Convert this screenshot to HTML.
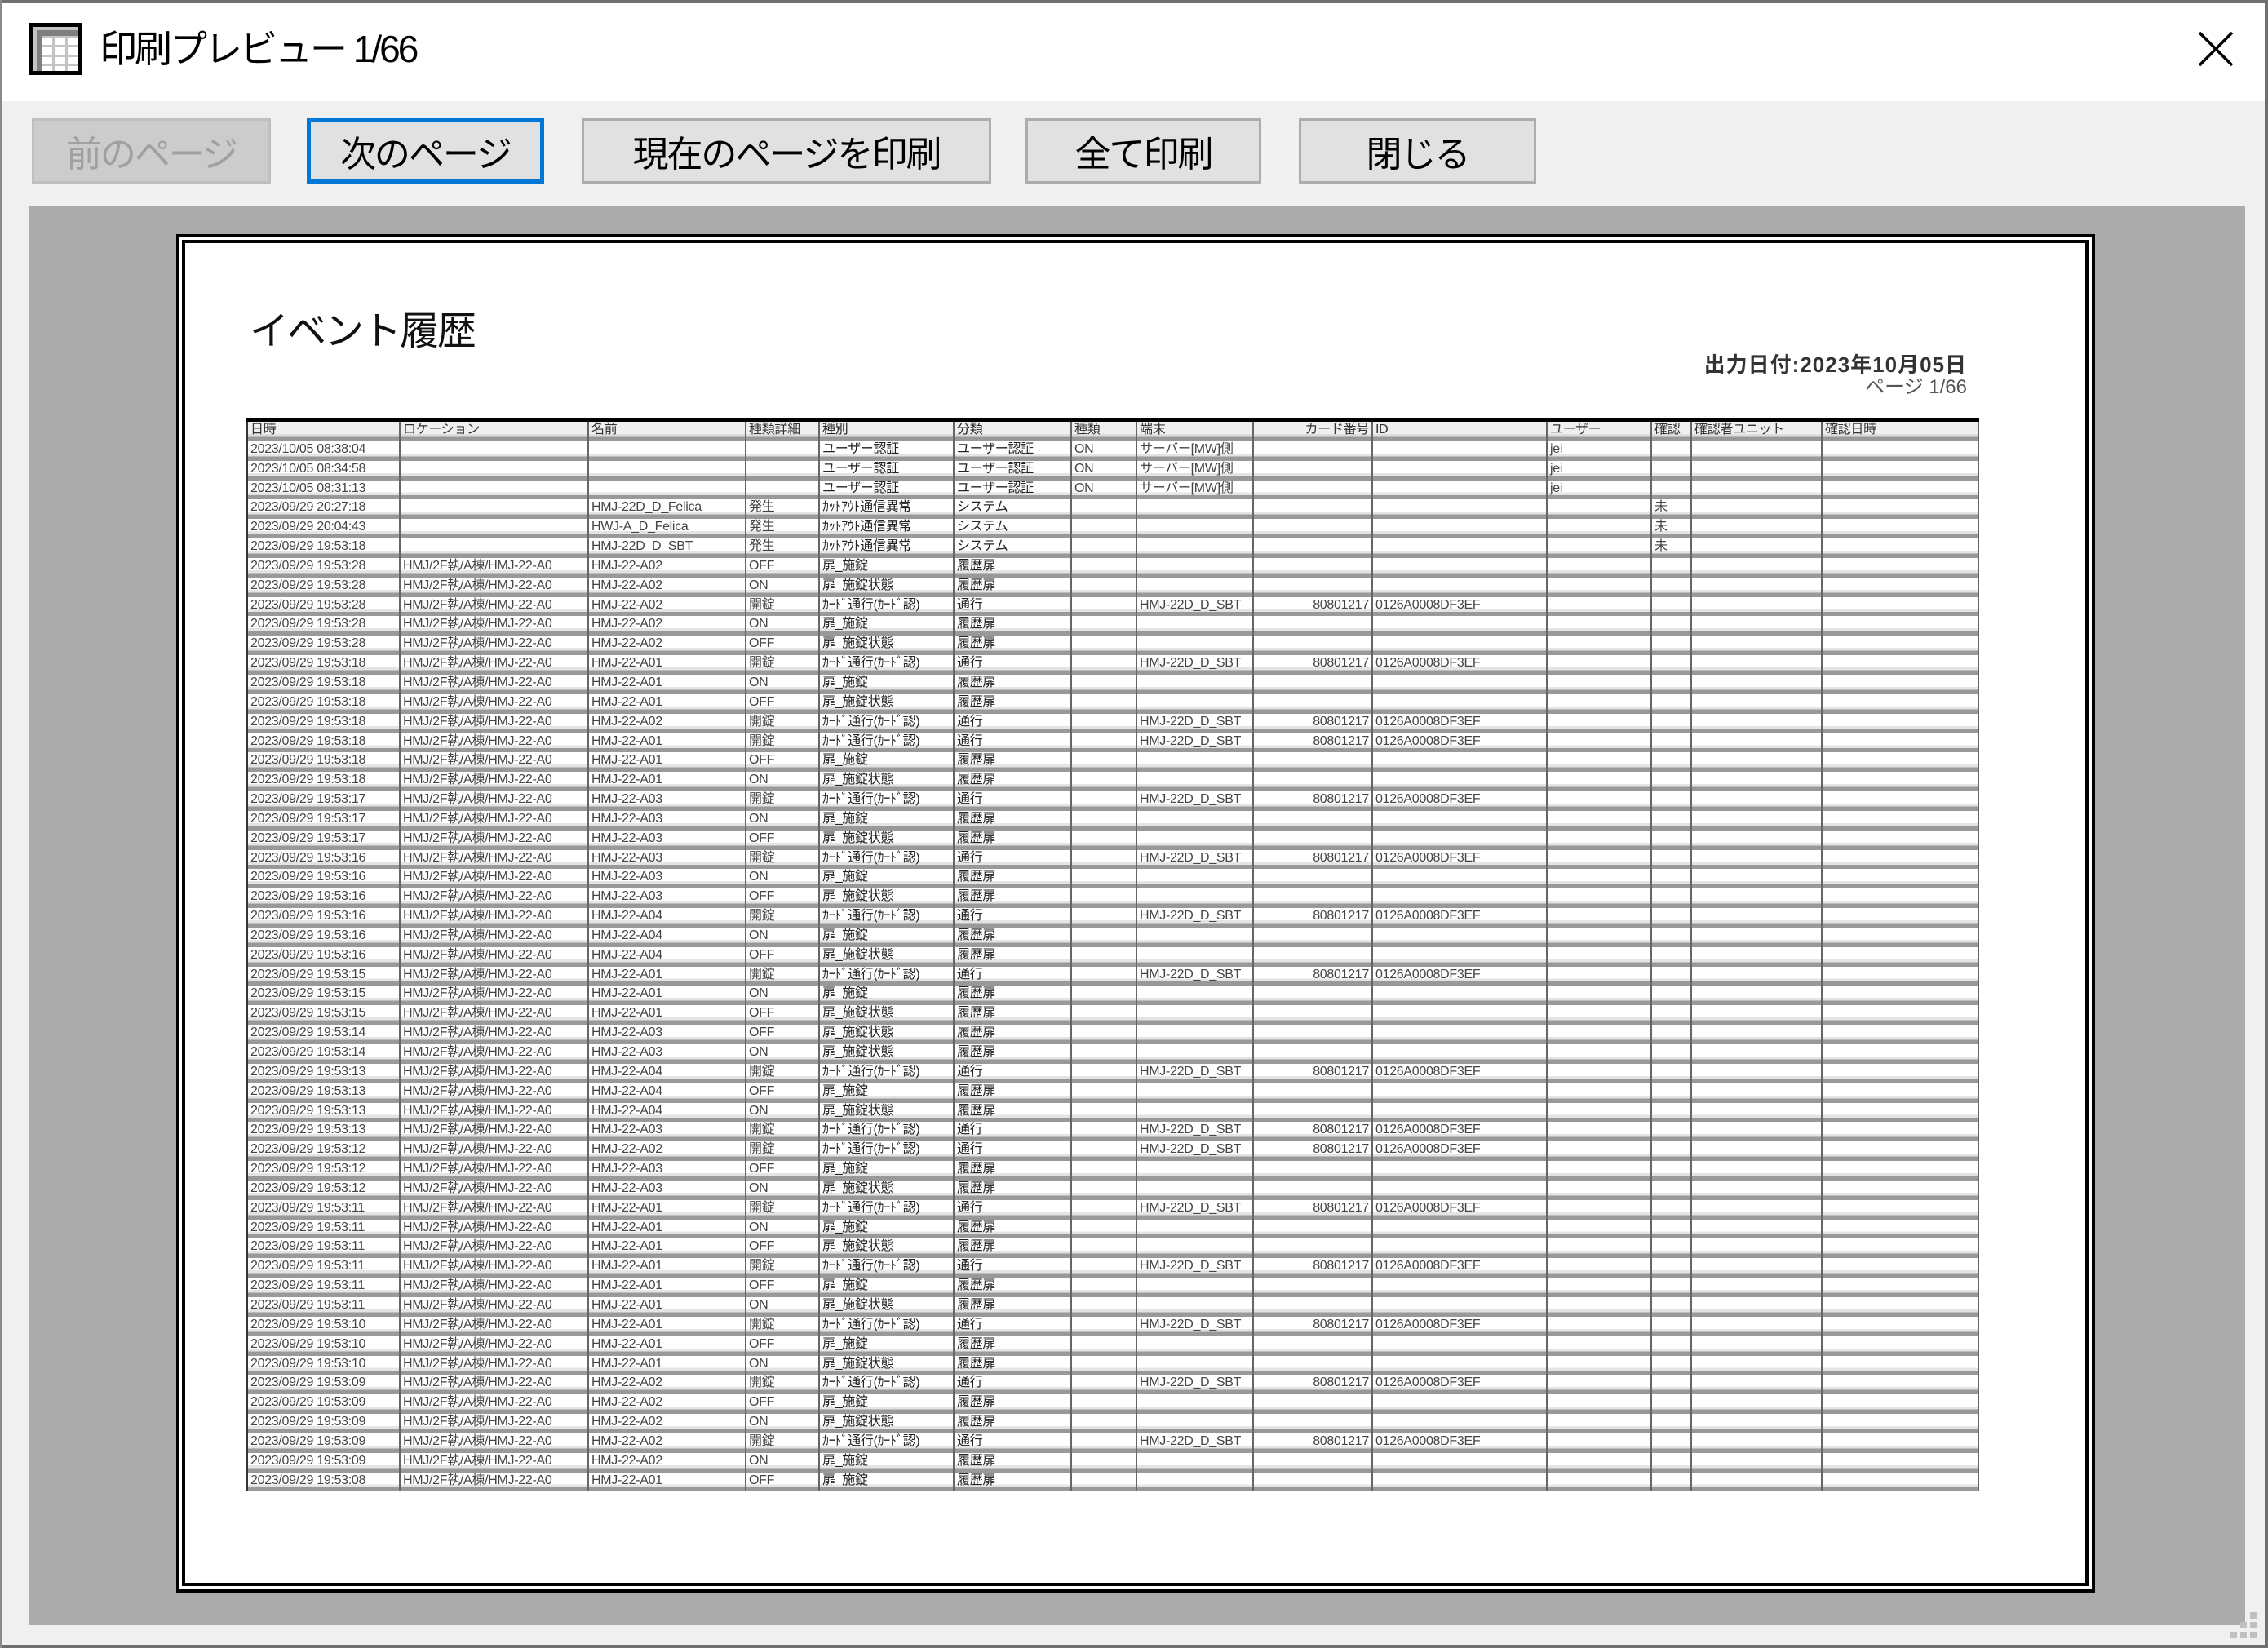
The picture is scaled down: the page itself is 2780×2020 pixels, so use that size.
<!DOCTYPE html>
<html><head><meta charset="utf-8"><style>
*{margin:0;padding:0;box-sizing:border-box}
body{width:2780px;height:2020px;background:#f0f0f0;position:relative;overflow:hidden;font-family:"Liberation Sans","Noto Sans CJK JP",sans-serif}
.abs{position:absolute}
#tb{left:0;top:0;width:2780px;height:124px;background:#fff}
.btn{position:absolute;top:145px;height:80px;background:#e1e1e1;border:3px solid #adadad;font-size:44px;color:#000;display:flex;align-items:center;justify-content:center;letter-spacing:-2px}
#gray{left:35px;top:252px;width:2717px;height:1740px;background:#ababab}
#page{left:216px;top:287px;width:2352px;height:1665px;background:#fff;border:4px solid #000}
#inner{left:3px;top:3px;right:4px;bottom:4px;border:4px solid #000;position:absolute}
#tbl{left:301px;top:512px;width:2125px;border-top:5px solid #000}
.r{display:flex;height:23.85px;background:linear-gradient(#fff 0,#fff 62%,#e4e4e4 62%,#e4e4e4 78%,#999 78%)}
.r.h{background:linear-gradient(#efefef 0,#efefef 62%,#ddd 62%,#ddd 78%,#999 78%)}
.r i{font-style:normal;font-size:16px;color:#444;line-height:20px;white-space:nowrap;overflow:hidden;border-right:2px solid #666;padding-left:3px;letter-spacing:-0.3px}
.r.h i{color:#333}
.r i:nth-child(1){width:190px;border-left:3px solid #333}
.r i:nth-child(2){width:231px}.r i:nth-child(3){width:193px}.r i:nth-child(4){width:90px}
.r i:nth-child(5){width:165px;color:#222}.r i:nth-child(6){width:144px;color:#222}.r i:nth-child(7){width:80px}
.r i:nth-child(8){width:143px}.r i:nth-child(9){width:146px;text-align:right;padding-right:3px}.r i:nth-child(10){width:214px}
.r i:nth-child(11){width:128px}.r i:nth-child(12){width:49px}.r i:nth-child(13){width:160px}.r i:nth-child(14){width:192px}
</style></head><body>
<div class="abs" style="left:0;top:0;width:2780px;height:4px;background:#6f6f6f;z-index:3"></div>
<div class="abs" style="left:2776px;top:0;width:4px;height:2020px;background:#6f6f6f;z-index:3"></div>
<div class="abs" style="left:0;top:2016px;width:2780px;height:4px;background:#6f6f6f;z-index:3"></div>
<div class="abs" style="left:0;top:0;width:2px;height:2020px;background:#8a8a8a;z-index:3"></div>
<div id="tb" class="abs">
<svg class="abs" style="left:36px;top:28px" width="64" height="64" viewBox="0 0 64 64">
<rect x="0" y="0" width="64" height="64" fill="#000"/>
<rect x="5" y="5" width="54" height="54" fill="#c4c4c4"/>
<rect x="9" y="9" width="50" height="50" fill="#7f7f7f"/>
<rect x="16" y="16" width="43" height="43" fill="#c4c4c4"/>
<g fill="#fff"><rect x="16" y="18" width="12" height="9"/><rect x="31" y="18" width="13" height="9"/><rect x="47" y="18" width="12" height="9"/>
<rect x="16" y="30" width="12" height="9"/><rect x="31" y="30" width="13" height="9"/><rect x="47" y="30" width="12" height="9"/>
<rect x="16" y="42" width="12" height="8"/><rect x="31" y="42" width="13" height="8"/><rect x="47" y="42" width="12" height="8"/>
<rect x="16" y="53" width="12" height="6"/><rect x="31" y="53" width="13" height="6"/><rect x="47" y="53" width="12" height="6"/></g>
</svg>
<div class="abs" style="left:122px;top:30px;font-size:46px;color:#000;letter-spacing:-3px;line-height:60px">印刷プレビュー 1/66</div>
<svg class="abs" style="left:2694px;top:38px" width="44" height="44" viewBox="0 0 44 44"><path d="M2 2L42 42M42 2L2 42" stroke="#000" stroke-width="3.5"/></svg>
</div>
<div class="btn" style="left:39px;width:293px;background:#cccccc;border-color:#bfbfbf;color:#a0a0a0">前のページ</div>
<div class="btn" style="left:376px;width:291px;border:5px solid #0078d7">次のページ</div>
<div class="btn" style="left:713px;width:502px">現在のページを印刷</div>
<div class="btn" style="left:1257px;width:289px">全て印刷</div>
<div class="btn" style="left:1592px;width:291px">閉じる</div>
<div id="gray" class="abs"></div>
<svg class="abs" style="left:2734px;top:1974px" width="36" height="36"><g fill="#c0c0c0"><rect x="24" y="2" width="8" height="8"/><rect x="12" y="14" width="8" height="8"/><rect x="24" y="14" width="8" height="8"/><rect x="0" y="26" width="8" height="8"/><rect x="12" y="26" width="8" height="8"/><rect x="24" y="26" width="8" height="8"/></g></svg>
<div id="page" class="abs"><div id="inner"></div></div>
<div class="abs" style="left:306px;top:366px;font-size:48px;color:#111;letter-spacing:-2px">イベント履歴</div>
<div class="abs" style="left:1900px;top:432px;width:511px;text-align:right;font-size:26px;font-weight:bold;color:#333;letter-spacing:1px;line-height:30px">出力日付:2023年10月05日</div>
<div class="abs" style="left:1900px;top:460px;width:511px;text-align:right;font-size:24px;color:#555;letter-spacing:0px;line-height:30px">ページ 1/66</div>
<div id="tbl" class="abs">
<div class="r h"><i>日時</i><i>ロケーション</i><i>名前</i><i>種類詳細</i><i>種別</i><i>分類</i><i>種類</i><i>端末</i><i>カード番号</i><i>ID</i><i>ユーザー</i><i>確認</i><i>確認者ユニット</i><i>確認日時</i></div>
<div class="r"><i>2023/10/05 08:38:04</i><i></i><i></i><i></i><i>ユーザー認証</i><i>ユーザー認証</i><i>ON</i><i>サーバー[MW]側</i><i></i><i></i><i>jei</i><i></i><i></i><i></i></div>
<div class="r"><i>2023/10/05 08:34:58</i><i></i><i></i><i></i><i>ユーザー認証</i><i>ユーザー認証</i><i>ON</i><i>サーバー[MW]側</i><i></i><i></i><i>jei</i><i></i><i></i><i></i></div>
<div class="r"><i>2023/10/05 08:31:13</i><i></i><i></i><i></i><i>ユーザー認証</i><i>ユーザー認証</i><i>ON</i><i>サーバー[MW]側</i><i></i><i></i><i>jei</i><i></i><i></i><i></i></div>
<div class="r"><i>2023/09/29 20:27:18</i><i></i><i>HMJ-22D_D_Felica</i><i>発生</i><i>ｶｯﾄｱｳﾄ通信異常</i><i>システム</i><i></i><i></i><i></i><i></i><i></i><i>未</i><i></i><i></i></div>
<div class="r"><i>2023/09/29 20:04:43</i><i></i><i>HWJ-A_D_Felica</i><i>発生</i><i>ｶｯﾄｱｳﾄ通信異常</i><i>システム</i><i></i><i></i><i></i><i></i><i></i><i>未</i><i></i><i></i></div>
<div class="r"><i>2023/09/29 19:53:18</i><i></i><i>HMJ-22D_D_SBT</i><i>発生</i><i>ｶｯﾄｱｳﾄ通信異常</i><i>システム</i><i></i><i></i><i></i><i></i><i></i><i>未</i><i></i><i></i></div>
<div class="r"><i>2023/09/29 19:53:28</i><i>HMJ/2F執/A棟/HMJ-22-A0</i><i>HMJ-22-A02</i><i>OFF</i><i>扉_施錠</i><i>履歴扉</i><i></i><i></i><i></i><i></i><i></i><i></i><i></i><i></i></div>
<div class="r"><i>2023/09/29 19:53:28</i><i>HMJ/2F執/A棟/HMJ-22-A0</i><i>HMJ-22-A02</i><i>ON</i><i>扉_施錠状態</i><i>履歴扉</i><i></i><i></i><i></i><i></i><i></i><i></i><i></i><i></i></div>
<div class="r"><i>2023/09/29 19:53:28</i><i>HMJ/2F執/A棟/HMJ-22-A0</i><i>HMJ-22-A02</i><i>開錠</i><i>ｶｰﾄﾞ通行(ｶｰﾄﾞ認)</i><i>通行</i><i></i><i>HMJ-22D_D_SBT</i><i>80801217</i><i>0126A0008DF3EF</i><i></i><i></i><i></i><i></i></div>
<div class="r"><i>2023/09/29 19:53:28</i><i>HMJ/2F執/A棟/HMJ-22-A0</i><i>HMJ-22-A02</i><i>ON</i><i>扉_施錠</i><i>履歴扉</i><i></i><i></i><i></i><i></i><i></i><i></i><i></i><i></i></div>
<div class="r"><i>2023/09/29 19:53:28</i><i>HMJ/2F執/A棟/HMJ-22-A0</i><i>HMJ-22-A02</i><i>OFF</i><i>扉_施錠状態</i><i>履歴扉</i><i></i><i></i><i></i><i></i><i></i><i></i><i></i><i></i></div>
<div class="r"><i>2023/09/29 19:53:18</i><i>HMJ/2F執/A棟/HMJ-22-A0</i><i>HMJ-22-A01</i><i>開錠</i><i>ｶｰﾄﾞ通行(ｶｰﾄﾞ認)</i><i>通行</i><i></i><i>HMJ-22D_D_SBT</i><i>80801217</i><i>0126A0008DF3EF</i><i></i><i></i><i></i><i></i></div>
<div class="r"><i>2023/09/29 19:53:18</i><i>HMJ/2F執/A棟/HMJ-22-A0</i><i>HMJ-22-A01</i><i>ON</i><i>扉_施錠</i><i>履歴扉</i><i></i><i></i><i></i><i></i><i></i><i></i><i></i><i></i></div>
<div class="r"><i>2023/09/29 19:53:18</i><i>HMJ/2F執/A棟/HMJ-22-A0</i><i>HMJ-22-A01</i><i>OFF</i><i>扉_施錠状態</i><i>履歴扉</i><i></i><i></i><i></i><i></i><i></i><i></i><i></i><i></i></div>
<div class="r"><i>2023/09/29 19:53:18</i><i>HMJ/2F執/A棟/HMJ-22-A0</i><i>HMJ-22-A02</i><i>開錠</i><i>ｶｰﾄﾞ通行(ｶｰﾄﾞ認)</i><i>通行</i><i></i><i>HMJ-22D_D_SBT</i><i>80801217</i><i>0126A0008DF3EF</i><i></i><i></i><i></i><i></i></div>
<div class="r"><i>2023/09/29 19:53:18</i><i>HMJ/2F執/A棟/HMJ-22-A0</i><i>HMJ-22-A01</i><i>開錠</i><i>ｶｰﾄﾞ通行(ｶｰﾄﾞ認)</i><i>通行</i><i></i><i>HMJ-22D_D_SBT</i><i>80801217</i><i>0126A0008DF3EF</i><i></i><i></i><i></i><i></i></div>
<div class="r"><i>2023/09/29 19:53:18</i><i>HMJ/2F執/A棟/HMJ-22-A0</i><i>HMJ-22-A01</i><i>OFF</i><i>扉_施錠</i><i>履歴扉</i><i></i><i></i><i></i><i></i><i></i><i></i><i></i><i></i></div>
<div class="r"><i>2023/09/29 19:53:18</i><i>HMJ/2F執/A棟/HMJ-22-A0</i><i>HMJ-22-A01</i><i>ON</i><i>扉_施錠状態</i><i>履歴扉</i><i></i><i></i><i></i><i></i><i></i><i></i><i></i><i></i></div>
<div class="r"><i>2023/09/29 19:53:17</i><i>HMJ/2F執/A棟/HMJ-22-A0</i><i>HMJ-22-A03</i><i>開錠</i><i>ｶｰﾄﾞ通行(ｶｰﾄﾞ認)</i><i>通行</i><i></i><i>HMJ-22D_D_SBT</i><i>80801217</i><i>0126A0008DF3EF</i><i></i><i></i><i></i><i></i></div>
<div class="r"><i>2023/09/29 19:53:17</i><i>HMJ/2F執/A棟/HMJ-22-A0</i><i>HMJ-22-A03</i><i>ON</i><i>扉_施錠</i><i>履歴扉</i><i></i><i></i><i></i><i></i><i></i><i></i><i></i><i></i></div>
<div class="r"><i>2023/09/29 19:53:17</i><i>HMJ/2F執/A棟/HMJ-22-A0</i><i>HMJ-22-A03</i><i>OFF</i><i>扉_施錠状態</i><i>履歴扉</i><i></i><i></i><i></i><i></i><i></i><i></i><i></i><i></i></div>
<div class="r"><i>2023/09/29 19:53:16</i><i>HMJ/2F執/A棟/HMJ-22-A0</i><i>HMJ-22-A03</i><i>開錠</i><i>ｶｰﾄﾞ通行(ｶｰﾄﾞ認)</i><i>通行</i><i></i><i>HMJ-22D_D_SBT</i><i>80801217</i><i>0126A0008DF3EF</i><i></i><i></i><i></i><i></i></div>
<div class="r"><i>2023/09/29 19:53:16</i><i>HMJ/2F執/A棟/HMJ-22-A0</i><i>HMJ-22-A03</i><i>ON</i><i>扉_施錠</i><i>履歴扉</i><i></i><i></i><i></i><i></i><i></i><i></i><i></i><i></i></div>
<div class="r"><i>2023/09/29 19:53:16</i><i>HMJ/2F執/A棟/HMJ-22-A0</i><i>HMJ-22-A03</i><i>OFF</i><i>扉_施錠状態</i><i>履歴扉</i><i></i><i></i><i></i><i></i><i></i><i></i><i></i><i></i></div>
<div class="r"><i>2023/09/29 19:53:16</i><i>HMJ/2F執/A棟/HMJ-22-A0</i><i>HMJ-22-A04</i><i>開錠</i><i>ｶｰﾄﾞ通行(ｶｰﾄﾞ認)</i><i>通行</i><i></i><i>HMJ-22D_D_SBT</i><i>80801217</i><i>0126A0008DF3EF</i><i></i><i></i><i></i><i></i></div>
<div class="r"><i>2023/09/29 19:53:16</i><i>HMJ/2F執/A棟/HMJ-22-A0</i><i>HMJ-22-A04</i><i>ON</i><i>扉_施錠</i><i>履歴扉</i><i></i><i></i><i></i><i></i><i></i><i></i><i></i><i></i></div>
<div class="r"><i>2023/09/29 19:53:16</i><i>HMJ/2F執/A棟/HMJ-22-A0</i><i>HMJ-22-A04</i><i>OFF</i><i>扉_施錠状態</i><i>履歴扉</i><i></i><i></i><i></i><i></i><i></i><i></i><i></i><i></i></div>
<div class="r"><i>2023/09/29 19:53:15</i><i>HMJ/2F執/A棟/HMJ-22-A0</i><i>HMJ-22-A01</i><i>開錠</i><i>ｶｰﾄﾞ通行(ｶｰﾄﾞ認)</i><i>通行</i><i></i><i>HMJ-22D_D_SBT</i><i>80801217</i><i>0126A0008DF3EF</i><i></i><i></i><i></i><i></i></div>
<div class="r"><i>2023/09/29 19:53:15</i><i>HMJ/2F執/A棟/HMJ-22-A0</i><i>HMJ-22-A01</i><i>ON</i><i>扉_施錠</i><i>履歴扉</i><i></i><i></i><i></i><i></i><i></i><i></i><i></i><i></i></div>
<div class="r"><i>2023/09/29 19:53:15</i><i>HMJ/2F執/A棟/HMJ-22-A0</i><i>HMJ-22-A01</i><i>OFF</i><i>扉_施錠状態</i><i>履歴扉</i><i></i><i></i><i></i><i></i><i></i><i></i><i></i><i></i></div>
<div class="r"><i>2023/09/29 19:53:14</i><i>HMJ/2F執/A棟/HMJ-22-A0</i><i>HMJ-22-A03</i><i>OFF</i><i>扉_施錠状態</i><i>履歴扉</i><i></i><i></i><i></i><i></i><i></i><i></i><i></i><i></i></div>
<div class="r"><i>2023/09/29 19:53:14</i><i>HMJ/2F執/A棟/HMJ-22-A0</i><i>HMJ-22-A03</i><i>ON</i><i>扉_施錠状態</i><i>履歴扉</i><i></i><i></i><i></i><i></i><i></i><i></i><i></i><i></i></div>
<div class="r"><i>2023/09/29 19:53:13</i><i>HMJ/2F執/A棟/HMJ-22-A0</i><i>HMJ-22-A04</i><i>開錠</i><i>ｶｰﾄﾞ通行(ｶｰﾄﾞ認)</i><i>通行</i><i></i><i>HMJ-22D_D_SBT</i><i>80801217</i><i>0126A0008DF3EF</i><i></i><i></i><i></i><i></i></div>
<div class="r"><i>2023/09/29 19:53:13</i><i>HMJ/2F執/A棟/HMJ-22-A0</i><i>HMJ-22-A04</i><i>OFF</i><i>扉_施錠</i><i>履歴扉</i><i></i><i></i><i></i><i></i><i></i><i></i><i></i><i></i></div>
<div class="r"><i>2023/09/29 19:53:13</i><i>HMJ/2F執/A棟/HMJ-22-A0</i><i>HMJ-22-A04</i><i>ON</i><i>扉_施錠状態</i><i>履歴扉</i><i></i><i></i><i></i><i></i><i></i><i></i><i></i><i></i></div>
<div class="r"><i>2023/09/29 19:53:13</i><i>HMJ/2F執/A棟/HMJ-22-A0</i><i>HMJ-22-A03</i><i>開錠</i><i>ｶｰﾄﾞ通行(ｶｰﾄﾞ認)</i><i>通行</i><i></i><i>HMJ-22D_D_SBT</i><i>80801217</i><i>0126A0008DF3EF</i><i></i><i></i><i></i><i></i></div>
<div class="r"><i>2023/09/29 19:53:12</i><i>HMJ/2F執/A棟/HMJ-22-A0</i><i>HMJ-22-A02</i><i>開錠</i><i>ｶｰﾄﾞ通行(ｶｰﾄﾞ認)</i><i>通行</i><i></i><i>HMJ-22D_D_SBT</i><i>80801217</i><i>0126A0008DF3EF</i><i></i><i></i><i></i><i></i></div>
<div class="r"><i>2023/09/29 19:53:12</i><i>HMJ/2F執/A棟/HMJ-22-A0</i><i>HMJ-22-A03</i><i>OFF</i><i>扉_施錠</i><i>履歴扉</i><i></i><i></i><i></i><i></i><i></i><i></i><i></i><i></i></div>
<div class="r"><i>2023/09/29 19:53:12</i><i>HMJ/2F執/A棟/HMJ-22-A0</i><i>HMJ-22-A03</i><i>ON</i><i>扉_施錠状態</i><i>履歴扉</i><i></i><i></i><i></i><i></i><i></i><i></i><i></i><i></i></div>
<div class="r"><i>2023/09/29 19:53:11</i><i>HMJ/2F執/A棟/HMJ-22-A0</i><i>HMJ-22-A01</i><i>開錠</i><i>ｶｰﾄﾞ通行(ｶｰﾄﾞ認)</i><i>通行</i><i></i><i>HMJ-22D_D_SBT</i><i>80801217</i><i>0126A0008DF3EF</i><i></i><i></i><i></i><i></i></div>
<div class="r"><i>2023/09/29 19:53:11</i><i>HMJ/2F執/A棟/HMJ-22-A0</i><i>HMJ-22-A01</i><i>ON</i><i>扉_施錠</i><i>履歴扉</i><i></i><i></i><i></i><i></i><i></i><i></i><i></i><i></i></div>
<div class="r"><i>2023/09/29 19:53:11</i><i>HMJ/2F執/A棟/HMJ-22-A0</i><i>HMJ-22-A01</i><i>OFF</i><i>扉_施錠状態</i><i>履歴扉</i><i></i><i></i><i></i><i></i><i></i><i></i><i></i><i></i></div>
<div class="r"><i>2023/09/29 19:53:11</i><i>HMJ/2F執/A棟/HMJ-22-A0</i><i>HMJ-22-A01</i><i>開錠</i><i>ｶｰﾄﾞ通行(ｶｰﾄﾞ認)</i><i>通行</i><i></i><i>HMJ-22D_D_SBT</i><i>80801217</i><i>0126A0008DF3EF</i><i></i><i></i><i></i><i></i></div>
<div class="r"><i>2023/09/29 19:53:11</i><i>HMJ/2F執/A棟/HMJ-22-A0</i><i>HMJ-22-A01</i><i>OFF</i><i>扉_施錠</i><i>履歴扉</i><i></i><i></i><i></i><i></i><i></i><i></i><i></i><i></i></div>
<div class="r"><i>2023/09/29 19:53:11</i><i>HMJ/2F執/A棟/HMJ-22-A0</i><i>HMJ-22-A01</i><i>ON</i><i>扉_施錠状態</i><i>履歴扉</i><i></i><i></i><i></i><i></i><i></i><i></i><i></i><i></i></div>
<div class="r"><i>2023/09/29 19:53:10</i><i>HMJ/2F執/A棟/HMJ-22-A0</i><i>HMJ-22-A01</i><i>開錠</i><i>ｶｰﾄﾞ通行(ｶｰﾄﾞ認)</i><i>通行</i><i></i><i>HMJ-22D_D_SBT</i><i>80801217</i><i>0126A0008DF3EF</i><i></i><i></i><i></i><i></i></div>
<div class="r"><i>2023/09/29 19:53:10</i><i>HMJ/2F執/A棟/HMJ-22-A0</i><i>HMJ-22-A01</i><i>OFF</i><i>扉_施錠</i><i>履歴扉</i><i></i><i></i><i></i><i></i><i></i><i></i><i></i><i></i></div>
<div class="r"><i>2023/09/29 19:53:10</i><i>HMJ/2F執/A棟/HMJ-22-A0</i><i>HMJ-22-A01</i><i>ON</i><i>扉_施錠状態</i><i>履歴扉</i><i></i><i></i><i></i><i></i><i></i><i></i><i></i><i></i></div>
<div class="r"><i>2023/09/29 19:53:09</i><i>HMJ/2F執/A棟/HMJ-22-A0</i><i>HMJ-22-A02</i><i>開錠</i><i>ｶｰﾄﾞ通行(ｶｰﾄﾞ認)</i><i>通行</i><i></i><i>HMJ-22D_D_SBT</i><i>80801217</i><i>0126A0008DF3EF</i><i></i><i></i><i></i><i></i></div>
<div class="r"><i>2023/09/29 19:53:09</i><i>HMJ/2F執/A棟/HMJ-22-A0</i><i>HMJ-22-A02</i><i>OFF</i><i>扉_施錠</i><i>履歴扉</i><i></i><i></i><i></i><i></i><i></i><i></i><i></i><i></i></div>
<div class="r"><i>2023/09/29 19:53:09</i><i>HMJ/2F執/A棟/HMJ-22-A0</i><i>HMJ-22-A02</i><i>ON</i><i>扉_施錠状態</i><i>履歴扉</i><i></i><i></i><i></i><i></i><i></i><i></i><i></i><i></i></div>
<div class="r"><i>2023/09/29 19:53:09</i><i>HMJ/2F執/A棟/HMJ-22-A0</i><i>HMJ-22-A02</i><i>開錠</i><i>ｶｰﾄﾞ通行(ｶｰﾄﾞ認)</i><i>通行</i><i></i><i>HMJ-22D_D_SBT</i><i>80801217</i><i>0126A0008DF3EF</i><i></i><i></i><i></i><i></i></div>
<div class="r"><i>2023/09/29 19:53:09</i><i>HMJ/2F執/A棟/HMJ-22-A0</i><i>HMJ-22-A02</i><i>ON</i><i>扉_施錠</i><i>履歴扉</i><i></i><i></i><i></i><i></i><i></i><i></i><i></i><i></i></div>
<div class="r"><i>2023/09/29 19:53:08</i><i>HMJ/2F執/A棟/HMJ-22-A0</i><i>HMJ-22-A01</i><i>OFF</i><i>扉_施錠</i><i>履歴扉</i><i></i><i></i><i></i><i></i><i></i><i></i><i></i><i></i></div>
</div>
</body></html>
